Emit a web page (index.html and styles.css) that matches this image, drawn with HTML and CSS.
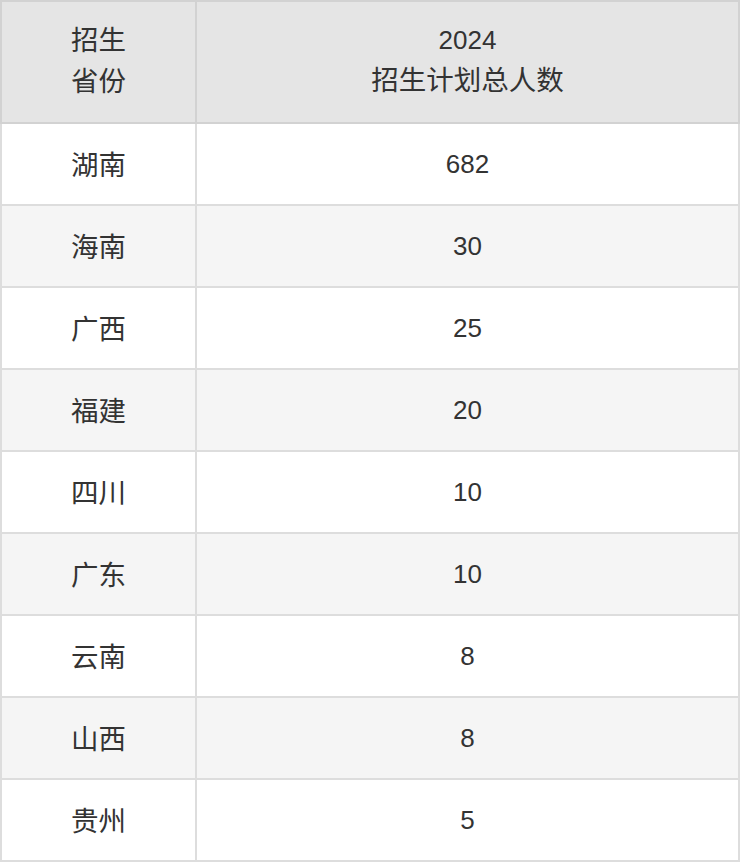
FILE: index.html
```html
<!DOCTYPE html>
<html lang="zh-CN">
<head>
<meta charset="utf-8">
<title>招生计划</title>
<link rel="stylesheet" href="styles.css">
</head>
<body>
<table class="plan">
  <thead>
    <tr>
      <th class="col-prov"><span class="zh">招生</span><br><span class="zh">省份</span></th>
      <th class="col-num">2024<br><span class="zh">招生计划总人数</span></th>
    </tr>
  </thead>
  <tbody>
    <tr><td><span class="zh">湖南</span></td><td>682</td></tr>
    <tr><td><span class="zh">海南</span></td><td>30</td></tr>
    <tr><td><span class="zh">广西</span></td><td>25</td></tr>
    <tr><td><span class="zh">福建</span></td><td>20</td></tr>
    <tr><td><span class="zh">四川</span></td><td>10</td></tr>
    <tr><td><span class="zh">广东</span></td><td>10</td></tr>
    <tr><td><span class="zh">云南</span></td><td>8</td></tr>
    <tr><td><span class="zh">山西</span></td><td>8</td></tr>
    <tr><td><span class="zh">贵州</span></td><td>5</td></tr>
  </tbody>
</table>
</body>
</html>
```
FILE: styles.css
```css
html, body {
  margin: 0;
  padding: 0;
  background: #ffffff;
}
.plan {
  width: 740px;
  border-collapse: collapse;
  font-family: "Liberation Sans", "Noto Sans CJK SC", sans-serif;
  font-size: 26px;
  line-height: 38px;
  color: #333333;
  table-layout: fixed;
}
.plan th,
.plan td {
  border: 2px solid #dddddd;
  text-align: center;
  vertical-align: middle;
  font-weight: normal;
  padding: 0;
}
.plan th {
  background: #e5e5e5;
  border-color: #d2d2d2;
  height: 116px;
  padding-bottom: 4px;
}
.plan td {
  height: 80px;
}
.zh {
  font-family: "Noto Sans CJK SC", sans-serif;
  font-size: 27.5px;
}
.col-prov {
  width: 193px;
}
.plan tbody tr:nth-child(even) td {
  background: #f5f5f5;
}
```
